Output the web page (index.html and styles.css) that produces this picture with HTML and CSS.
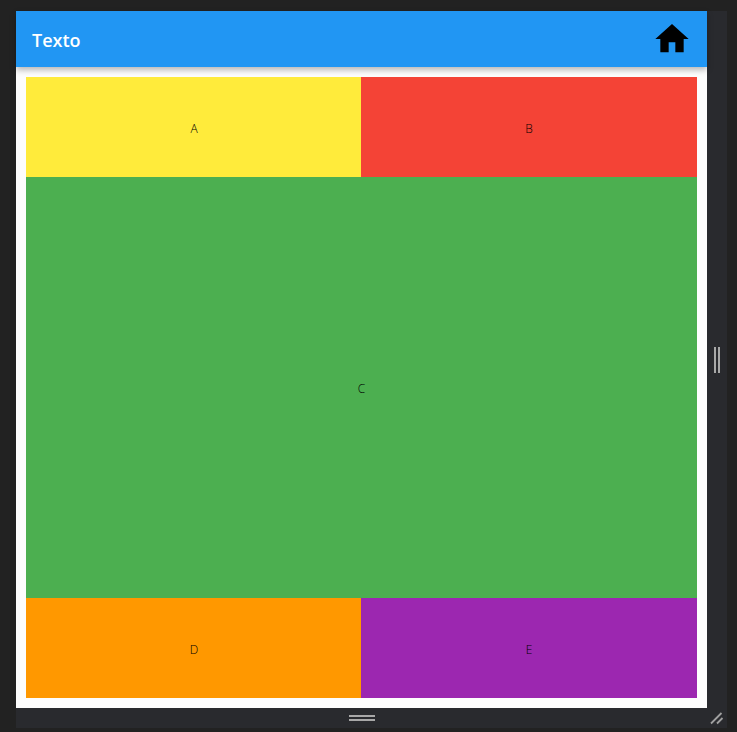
FILE: index.html
```html
<!DOCTYPE html>
<html lang="es">
<head>
<meta charset="utf-8">
<title>Texto</title>
<link rel="stylesheet" href="styles.css">
</head>
<body>
<div class="window">
  <div class="main">
    <div class="preview">
      <header class="appbar">
        <span class="title">Texto</span>
        <svg class="home" viewBox="0 0 24 24" width="40" height="40" aria-hidden="true"><path d="M10 20v-6h4v6h5v-8h3L12 3 2 12h3v8z"/></svg>
      </header>
      <div class="content">
        <div class="grid">
          <div class="cell left yellow">A</div>
          <div class="cell red">B</div>
          <div class="cell green wide">C</div>
          <div class="cell left orange">D</div>
          <div class="cell purple">E</div>
        </div>
      </div>
    </div>
    <div class="side-handle"><span class="vgrip"></span><span class="vgrip"></span></div>
  </div>
  <div class="bottom">
    <div class="bottom-handle"><span class="hgrip"></span><span class="hgrip"></span></div>
    <svg class="corner" width="14" height="14" viewBox="0 0 14 14" aria-hidden="true"><path d="M1 12.500 11.500 2M7 12.500 12.500 7" fill="none" stroke="#a0a0a0" stroke-width="1.800"/></svg>
  </div>
</div>
</body>
</html>
```
FILE: styles.css
```css
html, body {
  margin: 0;
  height: 100%;
  background: #222222;
  overflow: hidden;
}
body {
  padding: 11px 10px 4px 16px;
  box-sizing: border-box;
  font-family: "Open Sans", "Noto Sans", sans-serif;
}
.window {
  display: flex;
  flex-direction: column;
  height: 717px;
  width: 711px;
  background: #292a2e;
}
.main {
  display: flex;
  height: 697px;
}
.preview {
  width: 691px;
  background: #fdfdfd;
  display: flex;
  flex-direction: column;
}
.appbar {
  height: 56px;
  flex: none;
  background: #2196f3;
  display: flex;
  align-items: center;
  justify-content: space-between;
  padding: 0 15px 0 16px;
  box-shadow: 0 3px 6px rgba(0, 0, 0, 0.28);
  position: relative;
}
.title {
  color: #fff;
  font-size: 18px;
  font-weight: 600;
  position: relative;
  top: 1px;
}
.home {
  display: block;
  fill: #000;
}
.content {
  flex: 1;
  padding: 10px;
  min-height: 0;
}
.grid {
  display: grid;
  height: 100%;
  grid-template-columns: 335px 1fr;
  grid-template-rows: 100px 1fr 100px;
}
.cell {
  display: flex;
  align-items: center;
  justify-content: center;
  font-size: 12px;
  font-weight: 300;
  color: #000;
  padding-top: 2px;
  box-sizing: border-box;
}
.left { padding-left: 1px; }
.wide { grid-column: 1 / 3; }
.yellow { background: #ffeb3b; }
.red { background: #f44336; }
.green { background: #4caf50; }
.orange { background: #ff9800; }
.purple { background: #9c27b0; }
.side-handle {
  flex: 1;
  display: flex;
  align-items: center;
  justify-content: center;
  gap: 2px;
}
.vgrip {
  width: 2px;
  height: 26px;
  background: #a8a8a8;
}
.bottom {
  flex: 1;
  display: flex;
  align-items: center;
  padding-left: 333px;
  position: relative;
}
.bottom-handle {
  display: flex;
  flex-direction: column;
  gap: 2px;
}
.hgrip {
  width: 26px;
  height: 2px;
  background: #a8a8a8;
}
.corner {
  position: absolute;
  right: 3px;
  bottom: 3px;
}
```
